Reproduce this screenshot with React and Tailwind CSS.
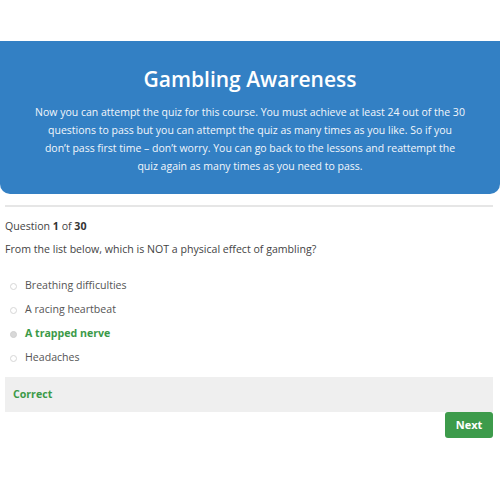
export default function App() {
  const options = [
    { label: "Breathing difficulties", correct: false },
    { label: "A racing heartbeat", correct: false },
    { label: "A trapped nerve", correct: true },
    { label: "Headaches", correct: false },
  ];
  return (
    <div className="w-[500px] h-[500px] bg-white overflow-hidden" style={{ fontFamily: '"Open Sans", sans-serif' }}>
      <div className="h-[41px]" />
      <div className="bg-[#3380c4] rounded-b-[10px] text-white text-center pt-[22px] pb-[19px]">
        <h1 className="text-[21px] font-semibold leading-[32px]">Gambling Awareness</h1>
        <p className="mt-[8px] mx-auto w-[433px] text-[10.5px] leading-[18px] text-[#f2f6fb]">
          Now you can attempt the quiz for this course. You must achieve at least 24 out of the 30 questions to pass but you can attempt the quiz as many times as you like. So if you don’t{"\u00A0"}pass first time – don’t worry. You can go back to the lessons and reattempt the quiz{"\u00A0"}again as many times as you need to pass.
        </p>
      </div>
      <div className="ml-[5px] mr-[7px] mt-[11px] h-[2px] bg-[#e6e6e6]" />
      <div className="pl-[5px] pr-[7px] text-[#444] text-[10.6px]">
        <div className="mt-[10px] leading-[18px]">
          Question <span className="font-bold text-[#333]">1</span> of <span className="font-bold text-[#333]">30</span>
        </div>
        <div className="mt-[5px] leading-[18px]">From the list below, which is NOT a physical effect of gambling?</div>
        <div className="mt-[16px] flex flex-col">
          {options.map((o) => (
            <div key={o.label} className="h-[24px] flex items-center pl-[5px]">
              <span className={"w-[7px] h-[7px] rounded-full border " + (o.correct ? "border-[#cfcfcf] bg-[#d8d8d8]" : "border-[#d6d6d6] bg-white")} />
              <span className={"ml-[8px] " + (o.correct ? "font-bold text-[#3b9a48]" : "text-[#555]")}>{o.label}</span>
            </div>
          ))}
        </div>
        <div className="mt-[7px] bg-[#efefef] h-[35px] flex items-center px-[8px]">
          <span className="font-bold text-[#3b9a48]">Correct</span>
        </div>
        <div className="flex justify-end">
          <button className="w-[48px] h-[26px] rounded-[3px] bg-[#3d9b4b] text-white font-bold text-[11px]">Next</button>
        </div>
      </div>
    </div>
  );
}
